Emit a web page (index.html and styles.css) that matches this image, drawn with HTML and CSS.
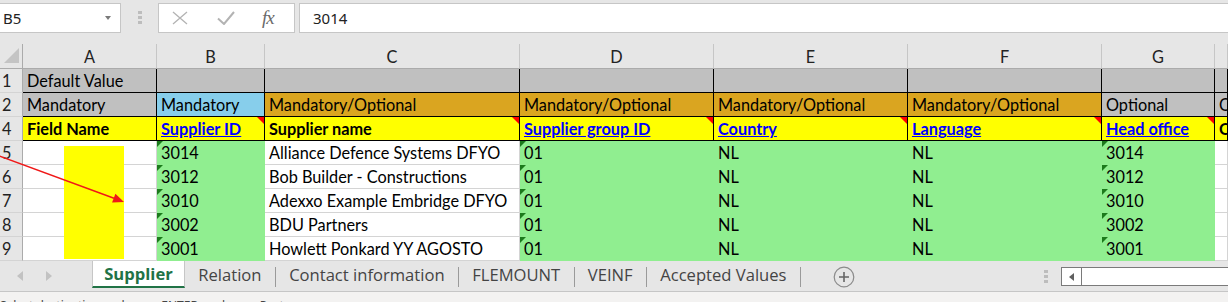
FILE: index.html
```html
<!DOCTYPE html>
<html lang="en">
<head>
    <meta charset="UTF-8">
    <title>Supplier import template</title>
    <link rel="stylesheet" href="styles.css">
</head>
<body>
    <div class="formula-bar">
        <div class="name-box">
            <span>B5</span>
            <svg class="dropdown" width="6" height="4" viewBox="0 0 6 4"><path d="M0 0h6L3 4z" fill="#7a7a7a"/></svg>
        </div>
        <div class="grip">
            <i></i><i></i><i></i>
        </div>
        <div class="fx-box">
            <svg class="fx-icon" width="16" height="14" viewBox="0 0 16 14">
                <path d="M1 1l14 12M15 1L1 13" stroke="#b3b3b3" stroke-width="1.3" fill="none"/>
            </svg>
            <svg class="fx-icon" width="18" height="14" viewBox="0 0 18 14">
                <path d="M1 7.5l6 5.5L17 1" stroke="#b3b3b3" stroke-width="2" fill="none"/>
            </svg>
            <span class="fx">fx</span>
        </div>
        <div class="formula-input">3014</div>
    </div>

    <div class="sheet">
        <!-- column headers -->
        <div class="corner">
            <svg width="16" height="17" viewBox="0 0 16 17"><path d="M0 16L15 1v15z" fill="#c4c4c4"/></svg>
        </div>
        <div class="colhdr">A</div>
        <div class="colhdr">B</div>
        <div class="colhdr">C</div>
        <div class="colhdr">D</div>
        <div class="colhdr">E</div>
        <div class="colhdr">F</div>
        <div class="colhdr">G</div>
        <div class="colhdr"></div>

        <!-- row 1 -->
        <div class="rowhdr">1</div>
        <div class="c b gray">Default Value</div>
        <div class="c b gray"></div>
        <div class="c b gray"></div>
        <div class="c b gray"></div>
        <div class="c b gray"></div>
        <div class="c b gray"></div>
        <div class="c b gray"></div>
        <div class="c b gray"></div>

        <!-- row 2 -->
        <div class="rowhdr">2</div>
        <div class="c b gray">Mandatory</div>
        <div class="c b blue">Mandatory</div>
        <div class="c b gold">Mandatory/Optional</div>
        <div class="c b gold">Mandatory/Optional</div>
        <div class="c b gold">Mandatory/Optional</div>
        <div class="c b gold">Mandatory/Optional</div>
        <div class="c b gray">Optional</div>
        <div class="c b gray">O</div>

        <!-- row 4 -->
        <div class="rowhdr">4</div>
        <div class="c b yellow head">Field Name</div>
        <div class="c b yellow note"><span class="link">Supplier ID</span></div>
        <div class="c b yellow note head">Supplier name</div>
        <div class="c b yellow note"><span class="link">Supplier group ID</span></div>
        <div class="c b yellow note"><span class="link">Country</span></div>
        <div class="c b yellow note"><span class="link">Language</span></div>
        <div class="c b yellow note"><span class="link">Head office</span></div>
        <div class="c b yellow head">C</div>

        <!-- rows 5-9 -->
        <div class="rowhdr">5</div>
        <div class="c"></div>
        <div class="c g flag">3014</div>
        <div class="c">Alliance Defence Systems DFYO</div>
        <div class="c g flag">01</div>
        <div class="c g">NL</div>
        <div class="c g">NL</div>
        <div class="c g flag">3014</div>
        <div class="c"></div>

        <div class="rowhdr">6</div>
        <div class="c"></div>
        <div class="c g flag">3012</div>
        <div class="c">Bob Builder - Constructions</div>
        <div class="c g flag">01</div>
        <div class="c g">NL</div>
        <div class="c g">NL</div>
        <div class="c g flag">3012</div>
        <div class="c"></div>

        <div class="rowhdr">7</div>
        <div class="c"></div>
        <div class="c g flag">3010</div>
        <div class="c">Adexxo Example Embridge DFYO</div>
        <div class="c g flag">01</div>
        <div class="c g">NL</div>
        <div class="c g">NL</div>
        <div class="c g flag">3010</div>
        <div class="c"></div>

        <div class="rowhdr">8</div>
        <div class="c"></div>
        <div class="c g flag">3002</div>
        <div class="c">BDU Partners</div>
        <div class="c g flag">01</div>
        <div class="c g">NL</div>
        <div class="c g">NL</div>
        <div class="c g flag">3002</div>
        <div class="c"></div>

        <div class="rowhdr">9</div>
        <div class="c"></div>
        <div class="c g flag">3001</div>
        <div class="c">Howlett Ponkard YY AGOSTO</div>
        <div class="c g flag">01</div>
        <div class="c g">NL</div>
        <div class="c g">NL</div>
        <div class="c g flag">3001</div>
        <div class="c"></div>

        <!-- drawn shapes lying on the sheet -->
        <div class="shape-yellow"></div>
        <svg class="shape-arrow" width="130" height="170" viewBox="0 0 130 170">
            <line x1="-2" y1="111.5" x2="114" y2="154.3" stroke="#f01818" stroke-width="1.6"/>
            <path d="M124 158L112.1 158.6 115.4 149.8z" fill="#f01818"/>
        </svg>
    </div>

    <div class="tabbar">
        <div class="tab-nav">
            <svg width="7" height="10" viewBox="0 0 7 10"><path d="M6 0v10L0 5z" fill="#c2c2c2"/></svg>
            <svg width="7" height="10" viewBox="0 0 7 10"><path d="M1 0v10l6-5z" fill="#c2c2c2"/></svg>
        </div>
        <div class="tab active">Supplier</div>
        <div class="tab">Relation</div>
        <span class="tab-sep"></span>
        <div class="tab">Contact information</div>
        <span class="tab-sep"></span>
        <div class="tab">FLEMOUNT</div>
        <span class="tab-sep"></span>
        <div class="tab">VEINF</div>
        <span class="tab-sep"></span>
        <div class="tab">Accepted Values</div>
        <span class="tab-sep"></span>
        <svg class="add-sheet" width="22" height="22" viewBox="0 0 22 22">
            <circle cx="11" cy="11" r="9.8" fill="none" stroke="#8a8a8a" stroke-width="1.2"/>
            <path d="M11 6v10M6 11h10" stroke="#666" stroke-width="1.6"/>
        </svg>
        <div class="grip tab-grip">
            <i></i><i></i><i></i>
        </div>
        <div class="hscroll">
            <div class="hscroll-btn">
                <svg width="5" height="8" viewBox="0 0 5 8"><path d="M5 0v8L0 4z" fill="#606060"/></svg>
            </div>
        </div>
    </div>

    <div class="statusbar">Select destination and press ENTER or choose Paste</div>
</body>
</html>
```

FILE: styles.css
```css
body {
    margin: 0;
    width: 1228px;
    height: 302px;
    overflow: hidden;
    background: #e6e6e6;
    font-family: 'Noto Sans', sans-serif;
    color: #000;
}

/* formula bar */
.formula-bar {
    height: 44px;
    display: flex;
    align-items: flex-start;
    padding-top: 3px;
    box-sizing: border-box;
}

.name-box {
    width: 122px;
    height: 30px;
    margin-left: -1px;
    box-sizing: border-box;
    background: #fff;
    border: 1px solid #c6c6c6;
    display: flex;
    align-items: center;
    justify-content: space-between;
    padding: 0 9px 0 3px;
    font-size: 15px;
    color: #222;
}

.grip {
    display: flex;
    flex-direction: column;
    gap: 2px;
    flex-shrink: 0;
}

.grip i {
    display: block;
    width: 4px;
    height: 3px;
    background: #bdbdbd;
}

.formula-bar .grip {
    margin: 8px 0 0 17px;
}

.fx-box {
    width: 137px;
    height: 30px;
    margin-left: 16px;
    box-sizing: border-box;
    background: #fff;
    border: 1px solid #c6c6c6;
    display: flex;
    align-items: center;
    padding-left: 13px;
}

.fx-icon:nth-child(2) {
    margin-left: 29px;
}

.fx {
    margin-left: 27px;
    font-family: 'Liberation Serif', serif;
    font-style: italic;
    font-size: 19px;
    color: #6a6a6a;
    letter-spacing: -1px;
}

.formula-input {
    flex: 1;
    height: 30px;
    margin-left: 4px;
    margin-right: -2px;
    box-sizing: border-box;
    background: #fff;
    border: 1px solid #c6c6c6;
    padding-left: 13px;
    font-size: 15px;
    line-height: 28px;
    color: #222;
}

/* grid */
.sheet {
    position: relative;
    display: grid;
    grid-template-columns: 23px 134px 108px 255px 194px 194px 194px 113px 1fr;
    grid-template-rows: 25px repeat(8, 24px);
    background: #fff;
    font-family: 'Lato', sans-serif;
    font-size: 16.3px;
}

.sheet > div {
    box-sizing: border-box;
    white-space: nowrap;
    overflow: hidden;
}

.corner {
    background: #e6e6e6;
    border-right: 1px solid #ababab;
    border-bottom: 1px solid #ababab;
    display: flex;
    align-items: flex-end;
    padding: 0 0 4px 4px;
}

.colhdr {
    background: #e6e6e6;
    border-right: 1px solid #c6c6c6;
    border-bottom: 1px solid #ababab;
    display: flex;
    justify-content: center;
    align-items: flex-end;
    line-height: 20px;
    padding-bottom: 1px;
    color: #222;
}

.rowhdr {
    background: #e6e6e6;
    border-right: 1px solid #ababab;
    border-bottom: 1px solid #d4d4d4;
    display: flex;
    align-items: flex-end;
    line-height: 20px;
    padding: 0 0 1px 2px;
    color: #222;
}

.c {
    position: relative;
    border-right: 1px solid #d4d4d4;
    border-bottom: 1px solid #d4d4d4;
    display: flex;
    align-items: flex-end;
    line-height: 20px;
    padding: 0 3px 1px 4px;
}

.c.b {
    border-color: #000;
}

.gray { background: #c0c0c0; }
.blue { background: #87ceeb; }
.gold { background: #daa520; }
.yellow { background: #ffff00; }

.c.g {
    background: #90ee90;
    border-color: #90ee90;
}

.head {
    font-weight: bold;
}

.link {
    font-weight: bold;
    color: #0000ff;
    text-decoration: underline;
}

/* comment marker, top right */
.note::after {
    content: '';
    position: absolute;
    top: 0;
    right: 0;
    border-top: 7px solid #ff0000;
    border-left: 7px solid transparent;
}

/* green number-as-text marker, top left */
.flag::before {
    content: '';
    position: absolute;
    top: 0;
    left: 0;
    border-top: 6px solid #1c7a1c;
    border-right: 6px solid transparent;
}

.shape-yellow {
    position: absolute;
    left: 64px;
    top: 102px;
    width: 60px;
    height: 113px;
    background: #ffff00;
}

.shape-arrow {
    position: absolute;
    left: 0;
    top: 0;
}

/* sheet tabs */
.tabbar {
    height: 30px;
    border-bottom: 1px solid #c6c6c6;
    display: flex;
    align-items: flex-start;
    font-family: 'Open Sans', sans-serif;
    font-size: 16.6px;
    color: #444;
    white-space: nowrap;
}

.tabbar > * {
    flex-shrink: 0;
}

.tab-nav {
    width: 92px;
    height: 30px;
    display: flex;
    align-items: center;
    gap: 21px;
    padding-left: 17px;
    box-sizing: border-box;
}

.tab {
    height: 26px;
    display: flex;
    align-items: center;
    padding: 0 13.3px;
}

.tab.active {
    box-sizing: border-box;
    width: 93px;
    height: 27px;
    justify-content: center;
    padding: 0 0 1px;
    background: #fff;
    border-left: 1px solid #c6c6c6;
    border-right: 1px solid #c6c6c6;
    border-bottom: 2px solid #217346;
    color: #217346;
    font-weight: bold;
}

.tab-sep {
    width: 1px;
    height: 20px;
    margin-top: 6px;
    background: #9a9a9a;
}

.add-sheet {
    margin: 5px 0 0 32px;
}

.tab-grip {
    margin: 9px 0 0 189px;
}

.hscroll {
    width: 200px;
    height: 19px;
    margin: 6px 0 0 13px;
    box-sizing: border-box;
    background: #fff;
    border: 1px solid #7a7a7a;
}

.hscroll-btn {
    width: 19px;
    height: 17px;
    border-right: 1px solid #7a7a7a;
    display: flex;
    align-items: center;
    justify-content: center;
}

.statusbar {
    height: 22px;
    background: #f3f2f1;
    padding: 6px 0 0 0;
    box-sizing: border-box;
    font-size: 12px;
    line-height: 16px;
    color: #444;
    white-space: nowrap;
}
```
